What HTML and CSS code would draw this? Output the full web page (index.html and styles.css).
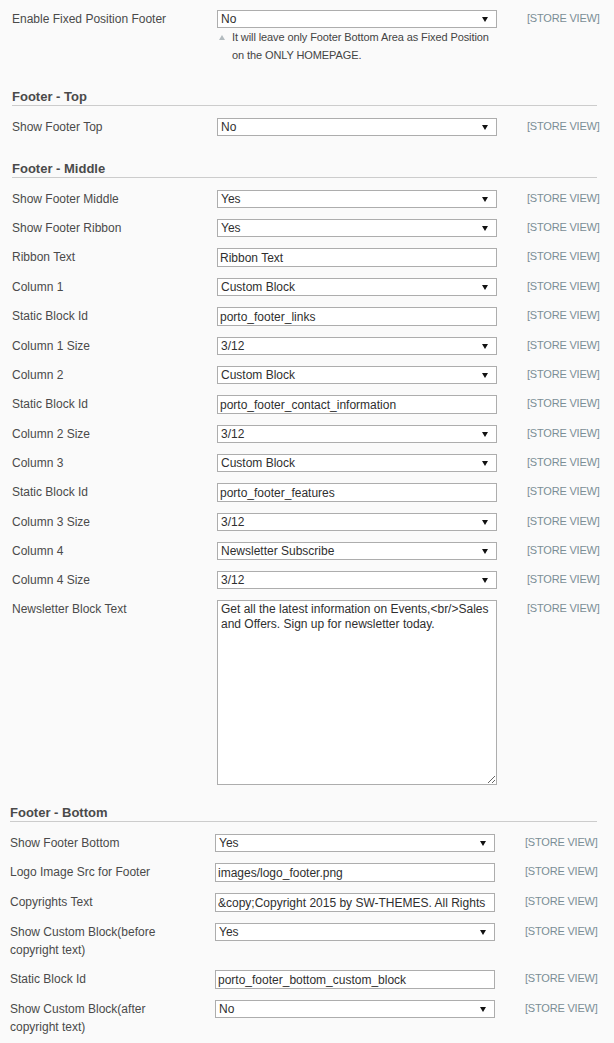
FILE: index.html
```html
<!DOCTYPE html>
<html>
<head>
<meta charset="utf-8">
<link rel="stylesheet" href="styles.css">
</head>
<body>
<div class="page">
  <div class="row">
    <div class="label">Enable Fixed Position Footer</div>
    <div class="field">
      <div class="select"><span>No</span><svg class="arrow" width="6" height="5" viewBox="0 0 6 5"><polygon points="0,0 6,0 3,5"/></svg></div>
      <div class="note"><svg class="note-arrow" width="6" height="5" viewBox="0 0 6 5"><polygon points="3,0 6,5 0,5"/></svg><span>It will leave only Footer Bottom Area as Fixed Position on the ONLY HOMEPAGE.</span></div>
    </div>
    <div class="scope">[STORE VIEW]</div>
  </div>

  <section class="group">
    <h4 class="group-title">Footer - Top</h4>
    <div class="row">
      <div class="label">Show Footer Top</div>
      <div class="field"><div class="select"><span>No</span><svg class="arrow" width="6" height="5" viewBox="0 0 6 5"><polygon points="0,0 6,0 3,5"/></svg></div></div>
      <div class="scope">[STORE VIEW]</div>
    </div>
  </section>

  <section class="group">
    <h4 class="group-title">Footer - Middle</h4>
    <div class="row">
      <div class="label">Show Footer Middle</div>
      <div class="field"><div class="select"><span>Yes</span><svg class="arrow" width="6" height="5" viewBox="0 0 6 5"><polygon points="0,0 6,0 3,5"/></svg></div></div>
      <div class="scope">[STORE VIEW]</div>
    </div>
    <div class="row">
      <div class="label">Show Footer Ribbon</div>
      <div class="field"><div class="select"><span>Yes</span><svg class="arrow" width="6" height="5" viewBox="0 0 6 5"><polygon points="0,0 6,0 3,5"/></svg></div></div>
      <div class="scope">[STORE VIEW]</div>
    </div>
    <div class="row">
      <div class="label">Ribbon Text</div>
      <div class="field"><input class="input" type="text" value="Ribbon Text"></div>
      <div class="scope">[STORE VIEW]</div>
    </div>
    <div class="row">
      <div class="label">Column 1</div>
      <div class="field"><div class="select"><span>Custom Block</span><svg class="arrow" width="6" height="5" viewBox="0 0 6 5"><polygon points="0,0 6,0 3,5"/></svg></div></div>
      <div class="scope">[STORE VIEW]</div>
    </div>
    <div class="row">
      <div class="label">Static Block Id</div>
      <div class="field"><input class="input" type="text" value="porto_footer_links"></div>
      <div class="scope">[STORE VIEW]</div>
    </div>
    <div class="row">
      <div class="label">Column 1 Size</div>
      <div class="field"><div class="select"><span>3/12</span><svg class="arrow" width="6" height="5" viewBox="0 0 6 5"><polygon points="0,0 6,0 3,5"/></svg></div></div>
      <div class="scope">[STORE VIEW]</div>
    </div>
    <div class="row">
      <div class="label">Column 2</div>
      <div class="field"><div class="select"><span>Custom Block</span><svg class="arrow" width="6" height="5" viewBox="0 0 6 5"><polygon points="0,0 6,0 3,5"/></svg></div></div>
      <div class="scope">[STORE VIEW]</div>
    </div>
    <div class="row">
      <div class="label">Static Block Id</div>
      <div class="field"><input class="input" type="text" value="porto_footer_contact_information"></div>
      <div class="scope">[STORE VIEW]</div>
    </div>
    <div class="row">
      <div class="label">Column 2 Size</div>
      <div class="field"><div class="select"><span>3/12</span><svg class="arrow" width="6" height="5" viewBox="0 0 6 5"><polygon points="0,0 6,0 3,5"/></svg></div></div>
      <div class="scope">[STORE VIEW]</div>
    </div>
    <div class="row">
      <div class="label">Column 3</div>
      <div class="field"><div class="select"><span>Custom Block</span><svg class="arrow" width="6" height="5" viewBox="0 0 6 5"><polygon points="0,0 6,0 3,5"/></svg></div></div>
      <div class="scope">[STORE VIEW]</div>
    </div>
    <div class="row">
      <div class="label">Static Block Id</div>
      <div class="field"><input class="input" type="text" value="porto_footer_features"></div>
      <div class="scope">[STORE VIEW]</div>
    </div>
    <div class="row">
      <div class="label">Column 3 Size</div>
      <div class="field"><div class="select"><span>3/12</span><svg class="arrow" width="6" height="5" viewBox="0 0 6 5"><polygon points="0,0 6,0 3,5"/></svg></div></div>
      <div class="scope">[STORE VIEW]</div>
    </div>
    <div class="row">
      <div class="label">Column 4</div>
      <div class="field"><div class="select"><span>Newsletter Subscribe</span><svg class="arrow" width="6" height="5" viewBox="0 0 6 5"><polygon points="0,0 6,0 3,5"/></svg></div></div>
      <div class="scope">[STORE VIEW]</div>
    </div>
    <div class="row">
      <div class="label">Column 4 Size</div>
      <div class="field"><div class="select"><span>3/12</span><svg class="arrow" width="6" height="5" viewBox="0 0 6 5"><polygon points="0,0 6,0 3,5"/></svg></div></div>
      <div class="scope">[STORE VIEW]</div>
    </div>
    <div class="row">
      <div class="label">Newsletter Block Text</div>
      <div class="field"><textarea class="textarea">Get all the latest information on Events,&lt;br/&gt;Sales and Offers. Sign up for newsletter today.</textarea></div>
      <div class="scope">[STORE VIEW]</div>
    </div>
  </section>

  <section class="group group--bottom">
    <h4 class="group-title">Footer - Bottom</h4>
    <div class="row">
      <div class="label">Show Footer Bottom</div>
      <div class="field"><div class="select"><span>Yes</span><svg class="arrow" width="6" height="5" viewBox="0 0 6 5"><polygon points="0,0 6,0 3,5"/></svg></div></div>
      <div class="scope">[STORE VIEW]</div>
    </div>
    <div class="row">
      <div class="label">Logo Image Src for Footer</div>
      <div class="field"><input class="input" type="text" value="images/logo_footer.png"></div>
      <div class="scope">[STORE VIEW]</div>
    </div>
    <div class="row">
      <div class="label">Copyrights Text</div>
      <div class="field"><input class="input input--clip" type="text" value="&amp;copy;Copyright 2015 by SW-THEMES. All Rights Reserved."></div>
      <div class="scope">[STORE VIEW]</div>
    </div>
    <div class="row">
      <div class="label">Show Custom Block(before copyright text)</div>
      <div class="field"><div class="select"><span>Yes</span><svg class="arrow" width="6" height="5" viewBox="0 0 6 5"><polygon points="0,0 6,0 3,5"/></svg></div></div>
      <div class="scope">[STORE VIEW]</div>
    </div>
    <div class="row">
      <div class="label">Static Block Id</div>
      <div class="field"><input class="input" type="text" value="porto_footer_bottom_custom_block"></div>
      <div class="scope">[STORE VIEW]</div>
    </div>
    <div class="row">
      <div class="label">Show Custom Block(after copyright text)</div>
      <div class="field"><div class="select"><span>No</span><svg class="arrow" width="6" height="5" viewBox="0 0 6 5"><polygon points="0,0 6,0 3,5"/></svg></div></div>
      <div class="scope">[STORE VIEW]</div>
    </div>
  </section>
</div>
</body>
</html>
```
FILE: styles.css
```css
html, body {
  margin: 0;
  padding: 0;
  background: #fafafa;
}
body {
  font-family: "Liberation Sans", Arial, sans-serif;
  font-size: 12px;
  color: #444;
}
.page {
  width: 585px;
  padding: 5px 0 0 12px;
}
.row {
  display: flex;
  align-items: flex-start;
  padding: 5px 0 6px;
}
.label {
  width: 205px;
  box-sizing: border-box;
  padding-right: 25px;
  line-height: 18px;
  color: #4a4a4a;
  flex: none;
}
.field {
  width: 280px;
  flex: none;
}
.scope {
  margin-left: 30px;
  font-size: 11px;
  line-height: 17px;
  color: #7a8e96;
  white-space: nowrap;
  letter-spacing: -0.2px;
}
.select {
  box-sizing: border-box;
  height: 18px;
  border: 1px solid #adadad;
  background: #fff;
  display: flex;
  align-items: center;
  justify-content: space-between;
  padding: 0 8px 0 3px;
  color: #2f2f2f;
  line-height: 16px;
}
.arrow {
  display: block;
  fill: #111;
}
.input {
  box-sizing: border-box;
  display: block;
  width: 280px;
  height: 19px;
  margin: 0;
  border: 1px solid #adadad;
  background: #fff;
  padding: 0 2px;
  font-family: "Liberation Sans", Arial, sans-serif;
  font-size: 12px;
  color: #2f2f2f;
  outline: none;
}
.input--clip {
  padding-right: 7px;
}
.textarea {
  box-sizing: border-box;
  display: block;
  width: 280px;
  height: 185px;
  margin: 0;
  border: 1px solid #adadad;
  background: #fff;
  padding: 1px 3px;
  font-family: "Liberation Sans", Arial, sans-serif;
  font-size: 12px;
  line-height: 15px;
  color: #2f2f2f;
  overflow: hidden;
  resize: both;
}
.note {
  display: flex;
  align-items: flex-start;
  font-size: 11px;
  line-height: 18px;
  color: #444;
  letter-spacing: -0.1px;
}
.note-arrow {
  flex: none;
  margin: 7px 7px 0 2px;
  fill: #b3bbbf;
}
.group {
  margin-top: 19px;
}
.group--bottom {
  margin-top: 14px;
  margin-left: -2px;
}
.group-title {
  margin: 0 0 7px;
  font-size: 13px;
  line-height: 16px;
  font-weight: bold;
  color: #4a4a4a;
  border-bottom: 1px solid #ccc;
}
```
